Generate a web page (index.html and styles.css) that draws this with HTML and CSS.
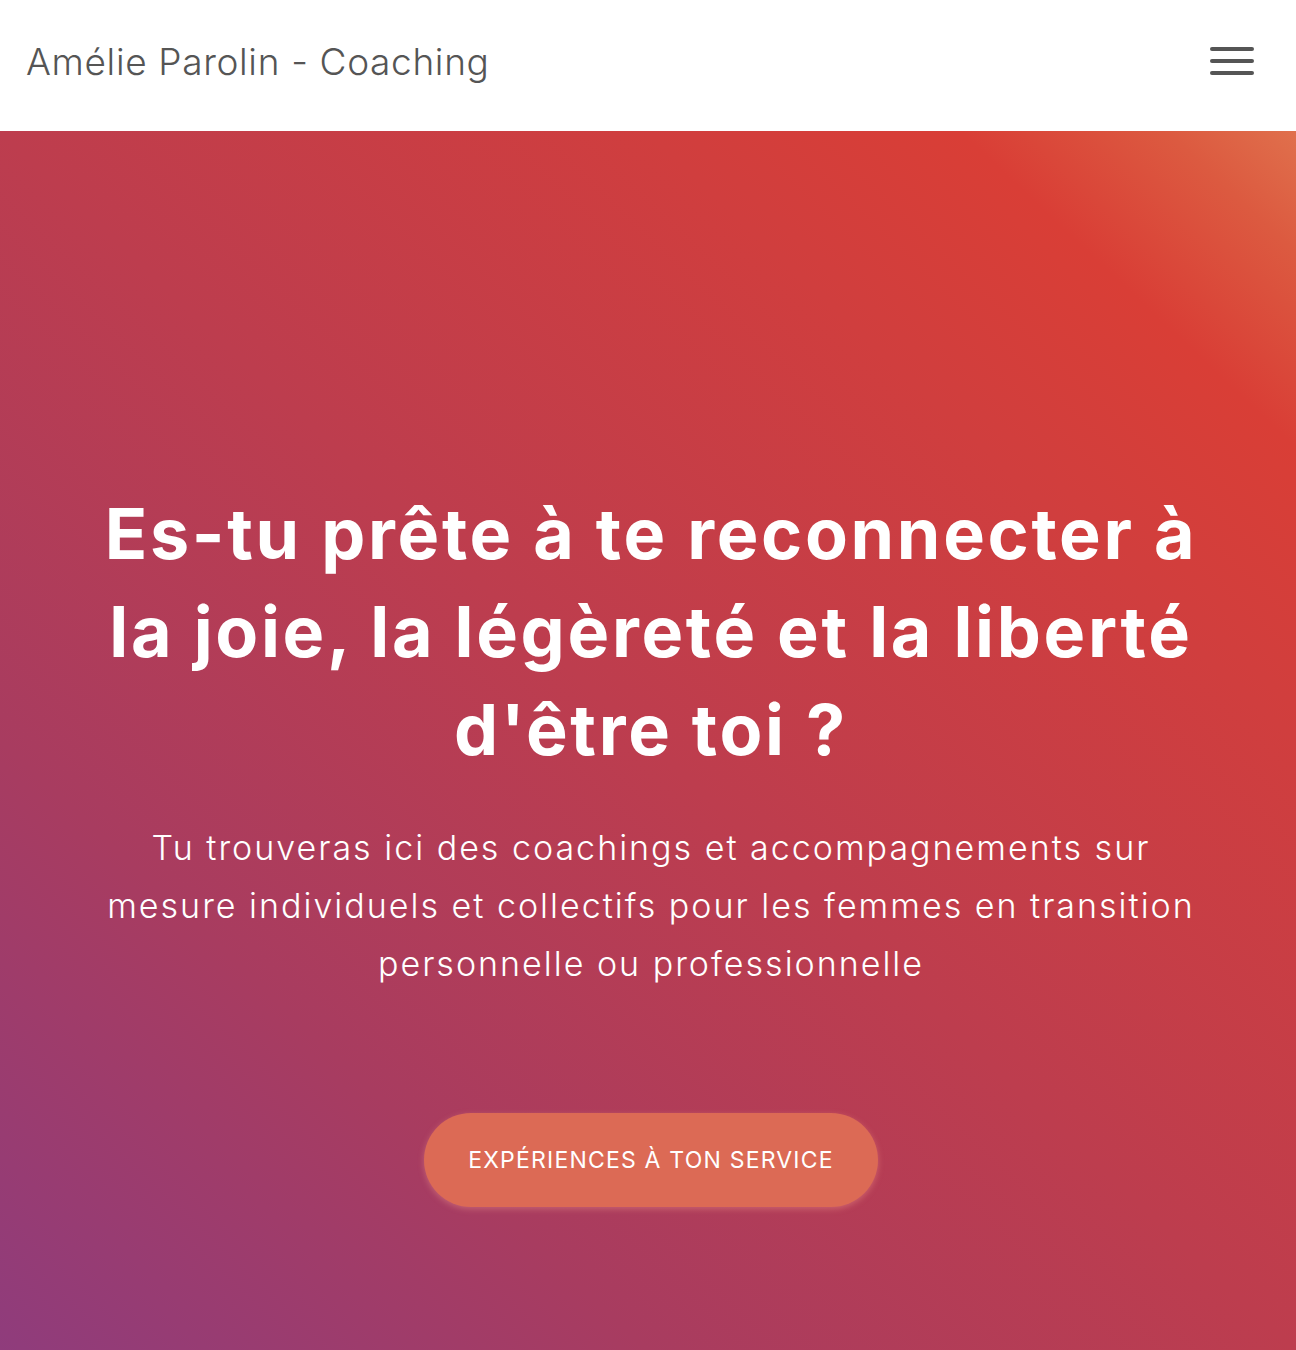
FILE: index.html
```html
<!DOCTYPE html>
<html lang="fr">
<head>
<meta charset="utf-8">
<title>Amélie Parolin - Coaching</title>
<link rel="stylesheet" href="styles.css">
</head>
<body>
<header class="site-header">
  <a class="brand" href="#">Amélie Parolin - Coaching</a>
  <button class="menu-toggle" aria-label="Menu">
    <span class="bar"></span>
    <span class="bar"></span>
    <span class="bar"></span>
  </button>
</header>
<section class="hero">
  <div class="hero-inner">
    <h1 class="hero-title">Es-tu prête à te reconnecter à<br>la joie, la légèreté et la liberté<br>d'être toi ?</h1>
    <p class="hero-text">Tu trouveras ici des coachings et accompagnements sur<br>mesure individuels et collectifs pour les femmes en transition<br>personnelle ou professionnelle</p>
    <a class="hero-button" href="#">EXPÉRIENCES À TON SERVICE</a>
  </div>
</section>
</body>
</html>
```

FILE: styles.css
```css
* { box-sizing: border-box; }
html, body { margin: 0; padding: 0; }
body {
  font-family: "Inter", "DejaVu Sans", sans-serif;
  background: #fff;
}
.site-header {
  height: 131px;
  display: flex;
  align-items: center;
  justify-content: space-between;
  padding: 0 42px 9px 26px;
  background: #fff;
}
.brand {
  font-family: "Inter", sans-serif;
  font-weight: 300;
  font-size: 37px;
  letter-spacing: 0.65px;
  color: #555;
  text-decoration: none;
}
.menu-toggle {
  width: 44px;
  height: 28px;
  padding: 0;
  border: 0;
  background: transparent;
  display: flex;
  flex-direction: column;
  justify-content: space-between;
}
.bar {
  display: block;
  width: 44px;
  height: 4px;
  border-radius: 2px;
  background: #555;
}
.hero {
  min-height: 1219px;
  background: linear-gradient(to top right, #8f3c7c 0%, #a83c60 25%, #bd3d4e 50%, #d03e3e 75%, #d93e36 87%, #dc5a40 95%, #e0704c 100%);
  display: flex;
  justify-content: center;
  padding-top: 354px;
  padding-left: 6px;
}
.hero-inner {
  width: 1160px;
  display: flex;
  flex-direction: column;
  align-items: center;
  text-align: center;
  color: #fff;
}
.hero-title {
  margin: 0;
  font-size: 70px;
  line-height: 98px;
  font-weight: 700;
  letter-spacing: 2.7px;
}
.hero-text {
  margin: 40px 0 0;
  font-size: 34px;
  line-height: 58px;
  font-weight: 300;
  letter-spacing: 2px;
}
.hero-button {
  margin-top: 120px;
  width: 454px;
  height: 94px;
  border-radius: 47px;
  background: #dc6a55;
  color: #fff;
  text-decoration: none;
  font-size: 23px;
  font-weight: 400;
  letter-spacing: 1.2px;
  display: flex;
  align-items: center;
  justify-content: center;
  box-shadow: 0 2px 6px rgba(255, 170, 150, 0.35);
}
```
